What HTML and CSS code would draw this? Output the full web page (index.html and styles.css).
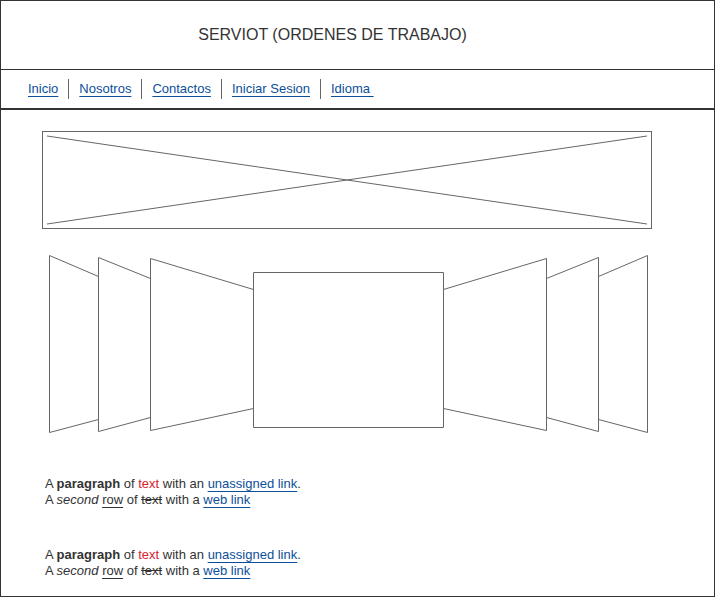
FILE: index.html
```html
<!DOCTYPE html>
<html lang="es">
<head>
<meta charset="utf-8">
<meta name="viewport" content="width=device-width, initial-scale=1">
<title>SERVIOT</title>
<link rel="stylesheet" href="styles.css">
</head>
<body>
<header class="header"><h1 class="title">SERVIOT (ORDENES DE TRABAJO)</h1></header>
<nav class="nav">
  <a class="nav-link" href="#">Inicio</a>
  <a class="nav-link" href="#">Nosotros</a>
  <a class="nav-link" href="#">Contactos</a>
  <a class="nav-link" href="#">Iniciar Sesion</a>
  <a class="nav-link" href="#">Idioma&nbsp;</a>
</nav>
<main class="main">
  <div class="banner">
    <svg class="cross" viewBox="0 0 600 88" preserveAspectRatio="none" aria-hidden="true">
      <path d="M0 0 600 88M0 88 600 0"/>
    </svg>
  </div>
  <svg class="carousel" viewBox="0 0 610 190" aria-hidden="true">
    <path d="M56.5 26.5 7.5 5.5V182.5L56.5 169.5"/>
    <path d="M108.5 28.5 56.5 7.5V181.5L108.5 167.5"/>
    <path d="M211.5 39.5 108.5 8.5V180.5L211.5 158.5"/>
    <path d="M211.5 22.5H401.5V177.5H211.5Z"/>
    <path d="M401.5 39.5 504.5 8.5V180.5L401.5 158.5"/>
    <path d="M504.5 28.5 556.5 7.5V181.5L504.5 167.5"/>
    <path d="M556.5 26.5 605.5 5.5V182.5L556.5 169.5"/>
  </svg>
  <p class="text">A <b>paragraph</b> of <span class="red">text</span> with an <a href="#">unassigned link</a>.<br>A <i>second</i> <u>row</u> of <s>text</s> with a <a href="#">web link</a></p>
  <p class="text">A <b>paragraph</b> of <span class="red">text</span> with an <a href="#">unassigned link</a>.<br>A <i>second</i> <u>row</u> of <s>text</s> with a <a href="#">web link</a></p>
</main>
</body>
</html>
```
FILE: styles.css
```css
* {
  box-sizing: border-box;
}

body {
  margin: 0;
  min-height: 100vh;
  border: 1px solid #333;
  background: #fff;
  color: #333;
  font: 13px/16px "Liberation Sans", Arial, sans-serif;
}

.header {
  padding: 22px 50px 22px 0;
  border-bottom: 1px solid #333;
  text-align: center;
}

.title {
  margin: 0;
  font-size: 16px;
  line-height: 24px;
  font-weight: 400;
}

a {
  color: #0b4f9a;
  text-decoration: underline;
  text-underline-offset: 3px;
}

u {
  text-underline-offset: 3px;
}

.nav {
  display: flex;
  min-height: 40px;
  padding: 9px 17px;
  border-bottom: 2px solid #333;
}

.nav-link {
  padding: 0 10px;
  line-height: 20px;
}

.nav-link + .nav-link {
  border-left: 1px solid #666;
}

.main {
  padding: 21px 62px 17px 41px;
}

.banner {
  padding: 4px;
  border: 1px solid #666;
}

.cross {
  display: block;
  width: 100%;
  height: 88px;
  overflow: visible;
}

.carousel {
  display: block;
  width: 100%;
  margin: 21px 0 36px;
}

path {
  fill: none;
  stroke: #666;
  stroke-width: 1px;
  vector-effect: non-scaling-stroke;
}

.text {
  margin: 0 3px;
}

.text + .text {
  margin-top: 39px;
}

.red {
  color: #d9232e;
}
```
